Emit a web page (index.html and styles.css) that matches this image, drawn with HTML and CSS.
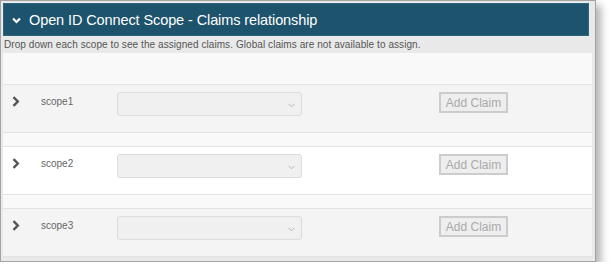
FILE: index.html
```html
<!DOCTYPE html>
<html>
<head>
<meta charset="utf-8">
<link rel="stylesheet" href="styles.css">
</head>
<body>
<div class="window">
  <div class="header">
    <svg class="hdr-icon" width="9" height="7" viewBox="0 0 9 7"><path d="M1 1.5 L4.5 5 L8 1.5" fill="none" stroke="#fff" stroke-width="2.2"/></svg>
    <span class="title">Open ID Connect Scope - Claims relationship</span>
  </div>
  <div class="desc">Drop down each scope to see the assigned claims. Global claims are not available to assign.</div>
  <div class="panel">
    <div class="blank"></div>
    <div class="row shade">
      <svg class="chev" width="8" height="11" viewBox="0 0 8 11"><path d="M1.5 1.2 L5.8 5.5 L1.5 9.8" fill="none" stroke="#555" stroke-width="2.4"/></svg>
      <span class="name">scope1</span>
      <div class="select"><svg width="7" height="5" viewBox="0 0 7 5"><path d="M0.5 0.8 L3.5 3.8 L6.5 0.8" fill="none" stroke="#aaa" stroke-width="0.9"/></svg></div>
      <button class="add" disabled>Add Claim</button>
    </div>
    <div class="spacer"></div>
    <div class="row white">
      <svg class="chev" width="8" height="11" viewBox="0 0 8 11"><path d="M1.5 1.2 L5.8 5.5 L1.5 9.8" fill="none" stroke="#555" stroke-width="2.4"/></svg>
      <span class="name">scope2</span>
      <div class="select"><svg width="7" height="5" viewBox="0 0 7 5"><path d="M0.5 0.8 L3.5 3.8 L6.5 0.8" fill="none" stroke="#aaa" stroke-width="0.9"/></svg></div>
      <button class="add" disabled>Add Claim</button>
    </div>
    <div class="spacer"></div>
    <div class="row shade">
      <svg class="chev" width="8" height="11" viewBox="0 0 8 11"><path d="M1.5 1.2 L5.8 5.5 L1.5 9.8" fill="none" stroke="#555" stroke-width="2.4"/></svg>
      <span class="name">scope3</span>
      <div class="select"><svg width="7" height="5" viewBox="0 0 7 5"><path d="M0.5 0.8 L3.5 3.8 L6.5 0.8" fill="none" stroke="#aaa" stroke-width="0.9"/></svg></div>
      <button class="add" disabled>Add Claim</button>
    </div>
  </div>
</div>
</body>
</html>
```
FILE: styles.css
```css
html, body { margin: 0; padding: 0; background: #fff; }
body { font-family: "Liberation Sans", Arial, sans-serif; }
.window {
  box-sizing: border-box;
  width: 596px;
  height: 262px;
  border: 1px solid #a3a3a3;
  background: #e9e9e9;
  padding: 2px 3px 4px 2px;
  box-shadow: 5px 5px 8px rgba(0,0,0,0.3);
}
.header {
  box-sizing: border-box;
  height: 33px;
  margin-right: 3px;
  background: #1d536d;
  border: 1px solid #2f6580;
  display: flex;
  align-items: center;
  padding-left: 8px;
}
.hdr-icon { margin-right: 8px; margin-top: 1px; }
.title { color: #fff; font-size: 14.5px; letter-spacing: -0.1px; }
.desc {
  height: 17px;
  font-size: 10px;
  letter-spacing: 0.07px;
  color: #555;
  line-height: 17px;
  padding-left: 1px;
}
.panel { background: #f9f9f9; }
.blank { height: 31px; border-bottom: 1px solid #e2e2e2; }
.spacer { height: 13px; border-bottom: 1px solid #e2e2e2; }
.row {
  box-sizing: border-box;
  height: 48px;
  border-bottom: 1px solid #e2e2e2;
  display: flex;
  align-items: flex-start;
  padding-top: 7px;
}
.row.shade { background: #f4f4f4; }
.row.white { background: #fff; }
.chev { margin-left: 9px; margin-top: 4px; }
.name {
  font-size: 10px;
  color: #666;
  width: 76px;
  margin-left: 21px;
  margin-top: 4px;
}
.select {
  box-sizing: border-box;
  width: 185px;
  height: 24px;
  background: #f0f0f0;
  border: 1px solid #dcdcdc;
  border-radius: 3px;
  display: flex;
  align-items: center;
  justify-content: flex-end;
  padding-right: 6px;
  padding-top: 3px;
}
.add {
  margin-left: 137px;
  box-sizing: border-box;
  width: 69px;
  height: 21px;
  background: #eeeeee;
  border: 2px solid #cccccc;
  border-radius: 0;
  color: #aaa;
  font-family: "Liberation Sans", Arial, sans-serif;
  font-size: 12px;
  padding: 0;
}
```
